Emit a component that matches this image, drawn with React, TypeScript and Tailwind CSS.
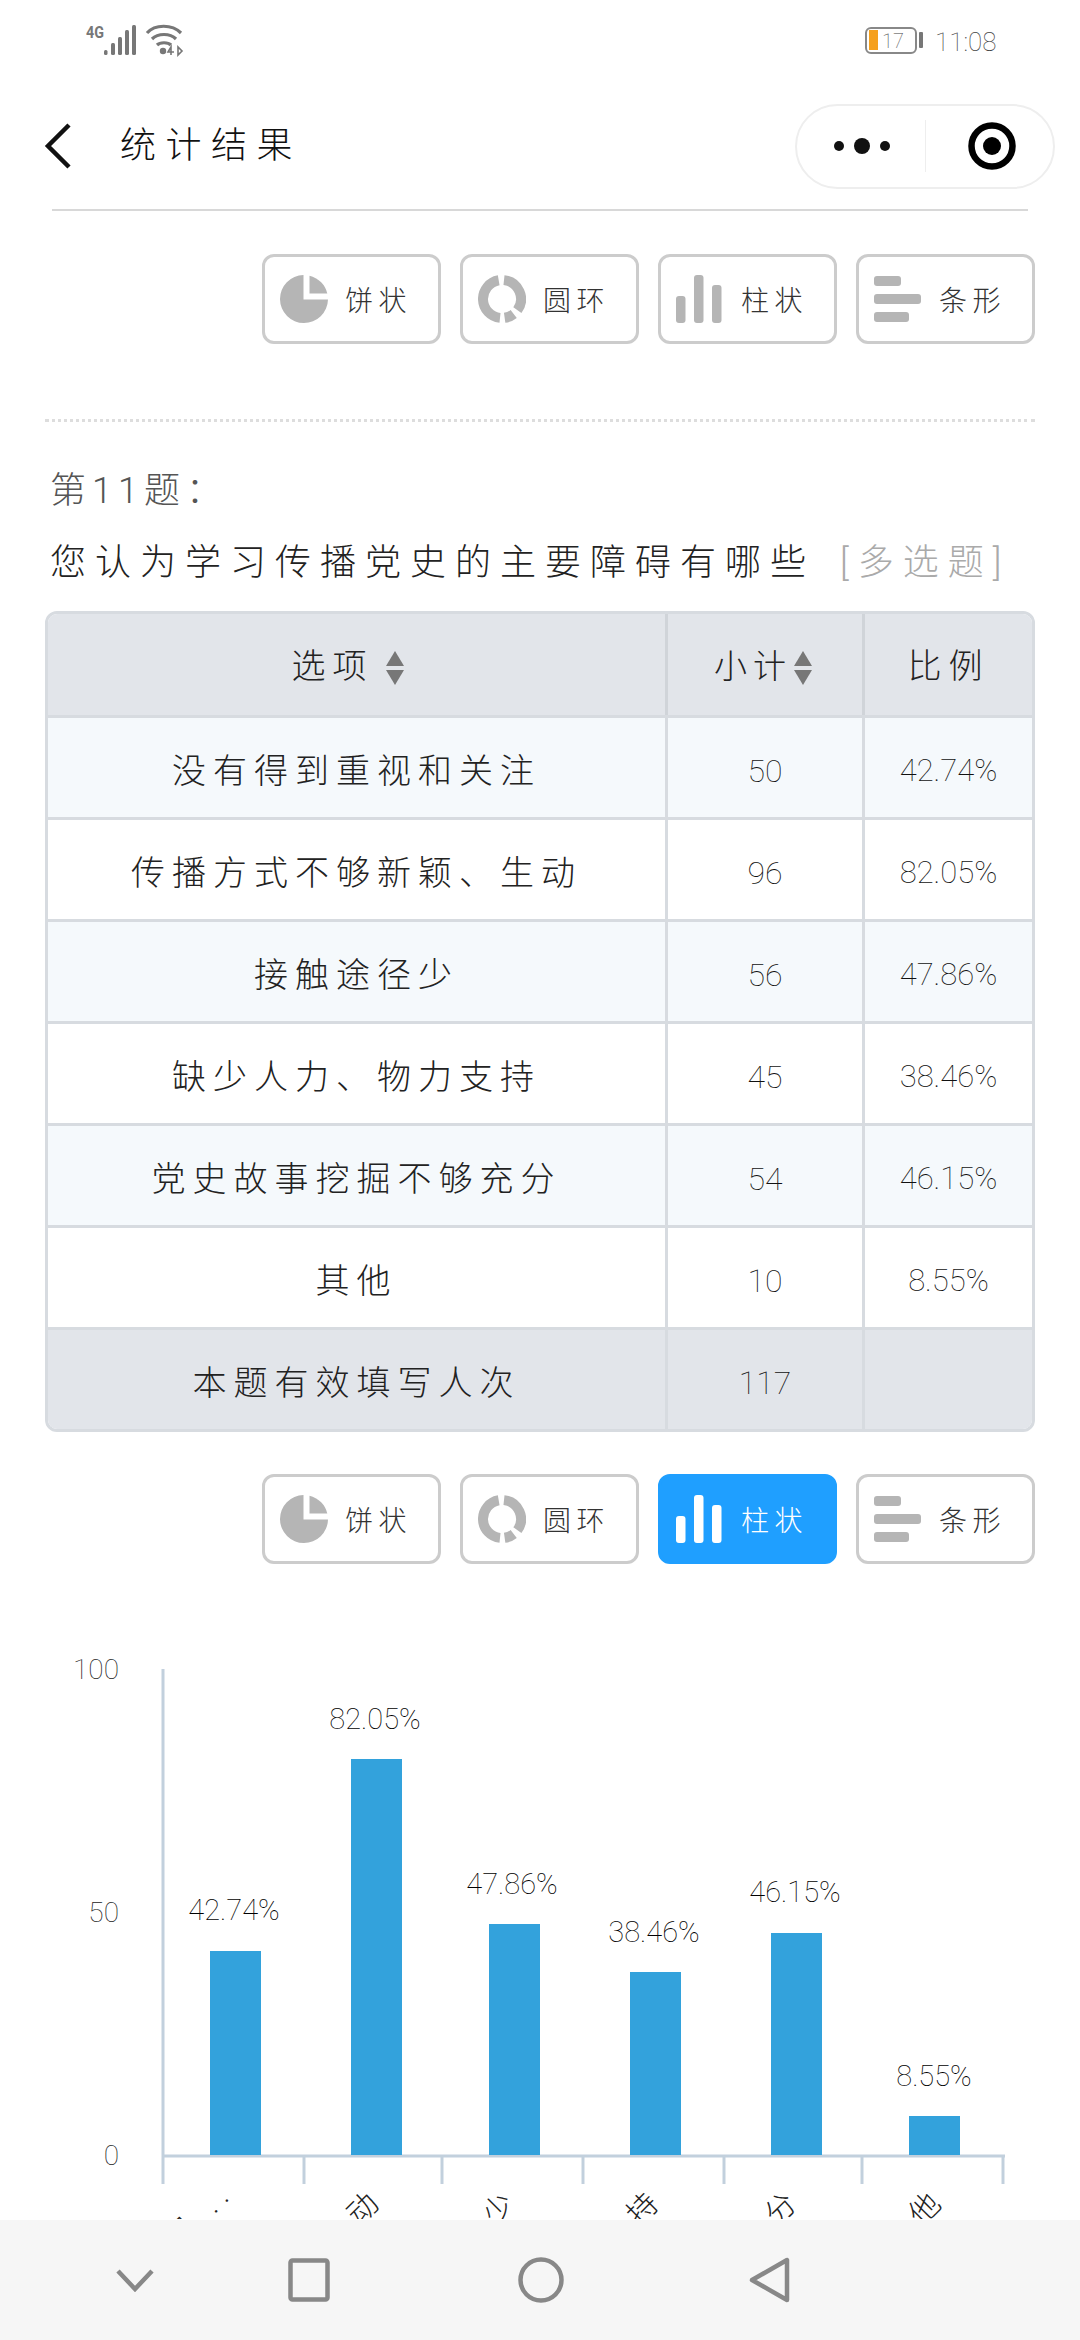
import React from "react";

const CJK = "font-['Roboto','Noto_Sans_CJK_SC',sans-serif] font-light";
const NUM = "font-['Roboto','Noto_Sans_CJK_SC',sans-serif] font-thin";

function arc(r: number, a: number, b: number) {
  const p = (d: number) => {
    const t = ((d - 90) * Math.PI) / 180;
    return `${(24 + r * Math.cos(t)).toFixed(2)} ${(24 + r * Math.sin(t)).toFixed(2)}`;
  };
  return `M${p(a)} A${r} ${r} 0 ${b - a > 180 ? 1 : 0} 1 ${p(b)}`;
}

function PieIcon({ c }: { c: string }) {
  return (
    <svg width="48" height="48" viewBox="0 0 48 48" fill={c}>
      <path d="M23.5 0 A24 24 0 1 0 48 24.5 H23.5 Z" />
      <path d="M29.5 0.7 A24 24 0 0 1 47.3 18.5 H29.5 Z" />
    </svg>
  );
}
function RingIcon({ c }: { c: string }) {
  return (
    <svg width="48" height="48" viewBox="0 0 48 48" fill="none" stroke={c} strokeWidth="10">
      <path d={arc(19, 6, 126)} />
      <path d={arc(19, 142, 172)} />
      <path d={arc(19, 186, 350)} />
    </svg>
  );
}
function BarIcon({ c }: { c: string }) {
  return (
    <svg width="48" height="48" viewBox="0 0 48 48" fill={c}>
      <rect x="0" y="21" width="9.5" height="27" rx="3" />
      <rect x="18" y="0" width="9.5" height="48" rx="3" />
      <rect x="36" y="10" width="9.5" height="38" rx="3" />
    </svg>
  );
}
function HBarIcon({ c }: { c: string }) {
  return (
    <svg width="48" height="48" viewBox="0 0 48 48" fill={c}>
      <rect x="0" y="1" width="27" height="10" rx="3" />
      <rect x="0" y="19" width="47" height="10" rx="3" />
      <rect x="0" y="37" width="35" height="10" rx="3" />
    </svg>
  );
}

function ChartBtn({ label, icon: Icon, active }: { label: string; icon: React.ComponentType<{ c: string }>; active?: boolean }) {
  return (
    <div
      className={
        active
          ? "flex items-center w-[179px] h-[90px] rounded-[12px] border-[3px] border-[#1f9fff] bg-[#1f9fff] pl-[15px]"
          : "flex items-center w-[179px] h-[90px] rounded-[12px] border-[3px] border-[#cccccc] bg-white pl-[15px]"
      }
    >
      <Icon c={active ? "#ffffff" : "#b5b5b5"} />
      <span
        className={
          active
            ? `${CJK} ml-[17px] pt-[6px] text-[28px] tracking-[5.5px] text-white whitespace-nowrap`
            : `${CJK} ml-[17px] pt-[6px] text-[28px] tracking-[5.5px] text-[#333333] whitespace-nowrap`
        }
      >
        {label}
      </span>
    </div>
  );
}

function BtnRow({ activeBar }: { activeBar?: boolean }) {
  return (
    <div className="flex justify-end gap-[19px] pr-[45px]">
      <ChartBtn label="饼状" icon={PieIcon} />
      <ChartBtn label="圆环" icon={RingIcon} />
      <ChartBtn label="柱状" icon={BarIcon} active={activeBar} />
      <ChartBtn label="条形" icon={HBarIcon} />
    </div>
  );
}

function Sort() {
  return (
    <svg width="18" height="34" viewBox="0 0 18 34" fill="#777777" className="ml-[2px] mt-[6px] shrink-0">
      <path d="M9 0 L18 15 H0 Z" />
      <path d="M0 19 H18 L9 34 Z" />
    </svg>
  );
}

const rows = [
  ["没有得到重视和关注", "50", "42.74%"],
  ["传播方式不够新颖、生动", "96", "82.05%"],
  ["接触途径少", "56", "47.86%"],
  ["缺少人力、物力支持", "45", "38.46%"],
  ["党史故事挖掘不够充分", "54", "46.15%"],
  ["其他", "10", "8.55%"],
];

function Table() {
  return (
    <div className="mx-[45px] rounded-[12px] border-[3px] border-[#d7dbe0] overflow-hidden">
      <div className="grid grid-cols-[620px_197px_1fr] h-[104px] bg-[#e2e5ea] border-b-[3px] border-[#d7dbe0]">
        <div className="flex items-center justify-center border-r-[3px] border-[#d0d4d9] pr-[18px]">
          <span className={`${CJK} pt-[4px] text-[34px] tracking-[7px] text-[#222222]`}>选项</span>
          <span className="ml-[10px] flex"><Sort /></span>
        </div>
        <div className="flex items-center justify-center border-r-[3px] border-[#d0d4d9] pr-[4px]">
          <span className={`${CJK} pt-[4px] text-[33px] tracking-[6px] text-[#222222]`}>小计</span>
          <Sort />
        </div>
        <div className="flex items-center justify-center">
          <span className={`${CJK} pt-[4px] text-[34px] tracking-[7px] text-[#222222]`}>比例</span>
        </div>
      </div>
      {rows.map((r, i) => (
        <div
          key={r[0]}
          className={
            i % 2 === 0
              ? "grid grid-cols-[620px_197px_1fr] h-[102px] bg-[#f5f9fc] border-b-[3px] border-[#d7dbe0]"
              : "grid grid-cols-[620px_197px_1fr] h-[102px] bg-white border-b-[3px] border-[#d7dbe0]"
          }
        >
          <div className={`${CJK} flex items-center justify-center pt-[7px] border-r-[3px] border-[#d7dbe0] text-[34px] tracking-[7px] text-[#222222]`}>{r[0]}</div>
          <div className={`${NUM} flex items-center justify-center pt-[7px] border-r-[3px] border-[#d7dbe0] text-[32px] text-[#111111]`}>{r[1]}</div>
          <div className={`${NUM} flex items-center justify-center pt-[7px] text-[31px] text-[#111111]`}>{r[2]}</div>
        </div>
      ))}
      <div className="grid grid-cols-[620px_197px_1fr] h-[99px] bg-[#e2e5ea]">
        <div className={`${CJK} flex items-center justify-center pt-[7px] border-r-[3px] border-[#d7dbe0] text-[34px] tracking-[7px] text-[#222222]`}>本题有效填写人次</div>
        <div className={`${NUM} flex items-center justify-center pt-[7px] border-r-[3px] border-[#d7dbe0] text-[32px] text-[#111111]`}>117</div>
        <div />
      </div>
    </div>
  );
}

const bars = [
  { x: 210, top: 1952, label: "42.74%", lx: 234, ly: 1911, name: "没有得到重视...", ax: 236, ay: 2194 },
  { x: 351, top: 1760, label: "82.05%", lx: 375, ly: 1720, name: "传播方式不够新颖、生动", ax: 386, ay: 2201 },
  { x: 489, top: 1925, label: "47.86%", lx: 512, ly: 1885, name: "接触途径少", ax: 522, ay: 2201 },
  { x: 630, top: 1973, label: "38.46%", lx: 654, ly: 1933, name: "缺少人力、物力支持", ax: 666, ay: 2201 },
  { x: 771, top: 1934, label: "46.15%", lx: 795, ly: 1893, name: "党史故事挖掘不够充分", ax: 804, ay: 2201 },
  { x: 909, top: 2117, label: "8.55%", lx: 934, ly: 2077, name: "其他", ax: 948, ay: 2201 },
];

function Chart() {
  const font = "Roboto, 'Noto Sans CJK SC', sans-serif";
  return (
    <svg width="1080" height="655" viewBox="0 1565 1080 655" className="block">
      <g stroke="#c2d0dd" strokeWidth="3">
        <line x1="163" y1="1670" x2="163" y2="2185" />
        <line x1="163" y1="2157" x2="1005" y2="2157" />
        {[304, 442, 583, 724, 862, 1003].map((x) => (
          <line key={x} x1={x} y1="2157" x2={x} y2="2185" />
        ))}
      </g>
      {[["100", 1670], ["50", 1913], ["0", 2156]].map(([t, y]) => (
        <text key={t} x="119" y={Number(y) + 10} textAnchor="end" fontFamily={font} fontWeight="100" fontSize="28" fill="#222222">{t}</text>
      ))}
      {bars.map((b) => (
        <g key={b.label}>
          <rect x={b.x} y={b.top} width="51" height={2156 - b.top} fill="#33a2dc" />
          <text x={b.lx} y={b.ly + 10} textAnchor="middle" fontFamily={font} fontWeight="100" fontSize="29" fill="#000000">{b.label}</text>
          <text x={b.ax} y={b.ay} textAnchor="end" fontFamily={font} fontWeight="300" fontSize="30" letterSpacing="8" fill="#222222" transform={`rotate(-45 ${b.ax} ${b.ay})`}>{b.name}</text>
        </g>
      ))}
    </svg>
  );
}

export default function App() {
  return (
    <div className="w-[1080px] h-[2340px] bg-white overflow-hidden flex flex-col">
      <div className="flex-1 min-h-0 overflow-hidden">
        {/* status bar */}
        <div className="h-[75px] flex items-start">
          <svg width="110" height="40" viewBox="80 20 110 40" className="ml-[80px] mt-[20px]">
            <text x="86" y="38" fontFamily="Roboto, sans-serif" fontWeight="700" fontSize="16" fill="#777777" textLength="18" lengthAdjust="spacingAndGlyphs">4G</text>
            <g fill="#777777">
              <rect x="104" y="50" width="3.5" height="5" rx="1.5" />
              <rect x="111" y="43" width="4" height="12" rx="1.5" />
              <rect x="118" y="37" width="4" height="18" rx="1.5" />
              <rect x="125" y="30" width="4" height="25" rx="1.5" />
              <rect x="132" y="25" width="4" height="30" rx="1.5" />
            </g>
            <g fill="none" stroke="#777777" strokeWidth="3.2">
              <path d="M147 33 C155 24 172 24 181 33" />
              <path d="M152 39 C158 33 170 33 176 39" />
              <path d="M157 45 C160 42 168 42 171 45" />
            </g>
            <circle cx="163" cy="51" r="3.2" fill="#777777" />
            <path d="M171 55 V47 L168 52 H174 M178 47 V55 L182 51 Z" fill="none" stroke="#777777" strokeWidth="1.6" />
          </svg>
          <svg width="62" height="32" viewBox="864 24 62 32" className="ml-[674px] mt-[24px]">
            <rect x="866" y="28" width="50" height="25" rx="5" fill="none" stroke="#888888" strokeWidth="2" />
            <rect x="869" y="30" width="9" height="20" fill="#f5a01e" />
            <rect x="919" y="32" width="4" height="16" rx="1" fill="#777777" />
            <text x="882" y="48" fontFamily="Roboto, sans-serif" fontWeight="100" fontSize="20" fill="#444444">17</text>
          </svg>
          <span className={`${NUM} ml-[9px] mt-[25px] text-[26px] leading-[34px] text-[#444444]`}>11:08</span>
        </div>

        {/* title bar */}
        <div className="h-[134px] flex items-center pt-[8px]">
          <svg width="28" height="46" viewBox="0 0 28 46" fill="none" stroke="#111111" strokeWidth="4.5" className="ml-[44px]">
            <path d="M25 2 L4 23 L25 44" />
          </svg>
          <span className={`${CJK} ml-[48px] text-[36px] tracking-[9.5px] text-[#111111]`}>统计结果</span>
          <div className="ml-auto mr-[25px] w-[260px] h-[85px] rounded-[43px] border-2 border-[#eeeeee] flex items-center">
            <svg width="56" height="18" viewBox="0 0 56 18" fill="#111111" className="ml-[37px]">
              <circle cx="5" cy="9" r="5" />
              <circle cx="28" cy="9" r="8" />
              <circle cx="51" cy="9" r="5" />
            </svg>
            <div className="ml-[35px] w-px h-[52px] bg-[#eeeeee]" />
            <svg width="48" height="48" viewBox="0 0 48 48" className="ml-[42px]">
              <circle cx="24" cy="24" r="20.5" fill="none" stroke="#000000" strokeWidth="6.5" />
              <circle cx="24" cy="24" r="9" fill="#000000" />
            </svg>
          </div>
        </div>
        <div className="mx-[52px] h-[2px] bg-[#d8d8d8]" />

        <div className="mt-[43px]">
          <BtnRow />
        </div>

        <div className="mx-[45px] mt-[75px] border-t-[3px] border-dotted border-[#dddddd]" />

        <div className={`${CJK} mt-[44px] ml-[50px] text-[36px] leading-[50px] tracking-[6px] text-[#555555]`}>第11题：</div>
        <div className={`${CJK} mt-[22px] ml-[50px] text-[36px] leading-[50px] tracking-[9px] text-[#222222] whitespace-nowrap`}>
          您认为学习传播党史的主要障碍有哪些
          <span className="ml-[25px] text-[#aaaaaa] tracking-[9px]">[多选题]</span>
        </div>

        <div className="mt-[23px]">
          <Table />
        </div>

        <div className="mt-[42px]">
          <BtnRow activeBar />
        </div>

        <Chart />
      </div>

      {/* system nav */}
      <div className="h-[120px] shrink-0 bg-[#f6f6f6] flex items-center">
        <svg width="40" height="24" viewBox="0 0 40 24" fill="none" stroke="#888888" strokeWidth="4.5" className="ml-[115px]">
          <path d="M3 3 L20 21 L37 3" />
        </svg>
        <svg width="42" height="44" viewBox="0 0 42 44" fill="none" stroke="#888888" strokeWidth="4.5" className="ml-[133px]">
          <rect x="2.5" y="2.5" width="37" height="39" rx="2" />
        </svg>
        <svg width="46" height="46" viewBox="0 0 46 46" fill="none" stroke="#888888" strokeWidth="4.5" className="ml-[188px]">
          <circle cx="23" cy="23" r="20.5" />
        </svg>
        <svg width="42" height="46" viewBox="0 0 42 46" fill="none" stroke="#888888" strokeWidth="4.5" strokeLinejoin="round" className="ml-[185px]">
          <path d="M38 3 V43 L3 23 Z" />
        </svg>
      </div>
    </div>
  );
}
